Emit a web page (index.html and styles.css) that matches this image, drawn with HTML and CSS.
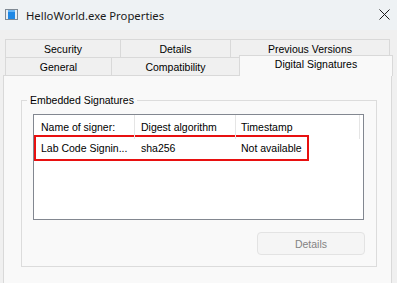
FILE: index.html
```html
<!DOCTYPE html>
<html lang="en">
<head>
<meta charset="UTF-8">
<link rel="stylesheet" href="styles.css">
<title>HelloWorld.exe Properties</title>
</head>
<body>

<div class="window">

<div class="titlebar">
<svg class="appIcon" width="13" height="11" viewBox="0 0 13 11">
<rect x="0.5" y="0.5" width="12" height="10" fill="#e8eef3" stroke="#7f8a94"/>
<rect x="3" y="1" width="7" height="9" fill="#1e88e5"/>
<rect x="3" y="1" width="7" height="2" fill="#64b5f6"/>
</svg>
<span class="titleText">HelloWorld.exe Properties</span>
<svg class="closeIcon" width="11" height="11" viewBox="0 0 11 11">
<path d="M0.5 0.5 L10.5 10.5 M10.5 0.5 L0.5 10.5" stroke="#1b1b1b" stroke-width="1"/>
</svg>
</div>

<div class="content">

<div class="tabRow rowTop">
<div class="tab tabSecurity">Security</div>
<div class="tab tabDetails">Details</div>
<div class="tab tabPrevious">Previous Versions</div>
</div>

<div class="tabRow rowBottom">
<div class="tab tabGeneral">General</div>
<div class="tab tabCompat">Compatibility</div>
<div class="tab tabSigs active">Digital Signatures</div>
</div>

<div class="panel">

<fieldset class="group">
<legend class="groupLabel">Embedded Signatures</legend>

<div class="list">
<div class="listHead">
<div class="col colName">Name of signer:</div>
<div class="col colAlgo">Digest algorithm</div>
<div class="col colTime">Timestamp</div>
</div>
<div class="listRow marked">
<div class="col colName">Lab Code Signin...</div>
<div class="col colAlgo">sha256</div>
<div class="col colTime">Not available</div>
</div>
</div>

<div class="btnRow">
<button class="btn" disabled>Details</button>
</div>

</fieldset>

</div>

</div>

</div>

</body>
</html>
```

FILE: styles.css
```css
*,*:before,*:after{
margin:0;
padding:0;
box-sizing:border-box;
}

:root{
--title_bg:#eef2f4;
--body_bg:#f0f0f0;
--panel_bg:#f9f9f9;
--tab_border:#d9d9d9;
--group_border:#dcdcdc;
--list_border:#828790;
--mark_red:#e81010;
--dlg_font:"Liberation Sans", Arial, sans-serif;
}

html,body{
width:397px;
height:283px;
overflow:hidden;
}

body{
background:var(--body_bg);
font-family:var(--dlg_font);
font-size:10.5px;
color:#000;
}

.window{
height:283px;
}

/* title bar */
.titlebar{
height:30px;
display:flex;
align-items:center;
padding:0 7px 0 5px;
background:var(--title_bg);
}

.appIcon{
margin-right:8px;
margin-top:-1px;
}

.titleText{
flex:1;
font-family:"Noto Sans", "Open Sans", sans-serif;
font-size:11.3px;
color:#1a1a1a;
}

.closeIcon{
margin-top:-1px;
}

/* tabs */
.content{
padding:9px 5px 0 3px;
}

.tabRow{
display:flex;
height:18px;
margin-left:2px;
}

.tab{
display:flex;
align-items:center;
justify-content:center;
height:18px;
background:var(--body_bg);
border:1px solid var(--tab_border);
border-bottom:none;
margin-right:-1px;
}

.tabSecurity{ width:116px; }
.tabDetails{ width:111px; }
.tabPrevious{ width:160px; }

.tabGeneral{ width:107px; }
.tabCompat{ width:129px; }

.tab.active{
width:154px;
height:21px;
margin-top:-2px;
padding-bottom:4px;
background:var(--panel_bg);
position:relative;
z-index:1;
}

/* page */
.panel{
height:220px;
background:var(--panel_bg);
border:1px solid var(--tab_border);
padding:17px 14px 0 17px;
}

.group{
border:1px solid var(--group_border);
padding:6px 12px 11px 11px;
height:174px;
}

.groupLabel{
margin-left:-6px;
padding:0 3px;
line-height:14px;
}

.list{
height:106px;
background:#fff;
border:1px solid var(--list_border);
margin-top:1px;
}

.listHead,.listRow{
display:flex;
}

.listHead{
height:24px;
}

.listHead .col{
height:24px;
display:flex;
align-items:center;
border-right:1px solid #e5e5e5;
}

.col{
flex-shrink:0;
white-space:nowrap;
}

.colName{ width:101px; padding-left:7px; }
.colAlgo{ width:101px; padding-left:6px; }
.colTime{ width:124px; padding-left:5px; }

.listRow{
height:26px;
align-items:center;
}

.marked{
width:275px;
border:2px solid var(--mark_red);
margin-top:-4px;
}

.marked .colName{
width:99px;
padding-left:5px;
}

.btnRow{
display:flex;
justify-content:flex-end;
margin-top:12px;
margin-right:-1px;
}

.btn{
width:108px;
height:23px;
font-family:var(--dlg_font);
font-size:10.5px;
color:#838383;
background:#f5f5f5;
border:1px solid #e3e3e3;
border-radius:4px;
}
```
